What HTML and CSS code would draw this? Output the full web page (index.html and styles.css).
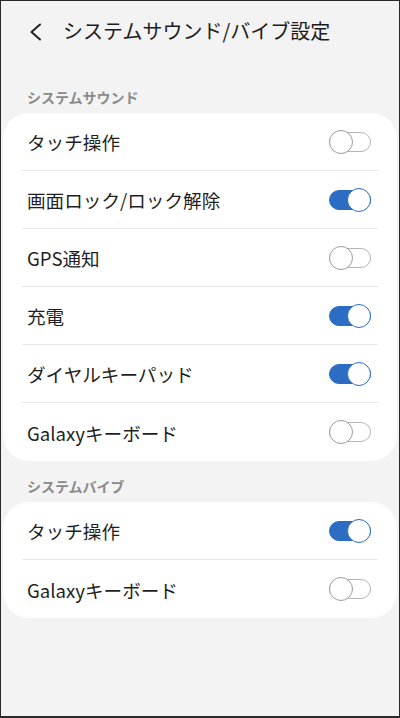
FILE: index.html
```html
<!DOCTYPE html>
<html lang="ja">
<head>
  <meta charset="UTF-8">
  <title>システムサウンド/バイブ設定</title>
  <link rel="stylesheet" href="styles.css">
</head>
<body>

  <div class="screen">
    <div class="top-bar">
      <svg class="back" width="14" height="18" viewBox="0 0 14 18">
        <polyline points="11,1.5 2.5,9 11,16.5" fill="none" stroke="#222" stroke-width="2" stroke-linecap="round" stroke-linejoin="round"/>
      </svg>
      <h1>システムサウンド/バイブ設定</h1>
    </div>

    <!-- System sound -->
    <div class="section-label">システムサウンド</div>
    <div class="card">
      <div class="row"><span>タッチ操作</span><span class="toggle"></span></div>
      <div class="row"><span>画面ロック/ロック解除</span><span class="toggle on"></span></div>
      <div class="row"><span>GPS通知</span><span class="toggle"></span></div>
      <div class="row"><span>充電</span><span class="toggle on"></span></div>
      <div class="row"><span>ダイヤルキーパッド</span><span class="toggle on"></span></div>
      <div class="row"><span>Galaxyキーボード</span><span class="toggle"></span></div>
    </div>

    <!-- System vibration -->
    <div class="section-label">システムバイブ</div>
    <div class="card">
      <div class="row"><span>タッチ操作</span><span class="toggle on"></span></div>
      <div class="row"><span>Galaxyキーボード</span><span class="toggle"></span></div>
    </div>
  </div>

</body>
</html>
```

FILE: styles.css
```css
body {
  margin: 0;
  font-family: "Noto Sans CJK JP", "Noto Sans", sans-serif;
  color: #1f1f1f;
}

.screen {
  box-sizing: border-box;
  width: 400px;
  height: 718px;
  background: #f3f3f3;
  border: 1px solid #2a2a2a;
  border-bottom-width: 2px;
  overflow: hidden;
}

/* Header */
.top-bar {
  display: flex;
  align-items: center;
  height: 60px;
  padding-left: 28px;
  margin-bottom: 11px;
}

.back {
  display: block;
  margin-top: 1px;
}

.top-bar h1 {
  margin: 0 0 0 20px;
  font-size: 20px;
  font-weight: 400;
  line-height: 24px;
  color: #1c1c1c;
}

.section-label {
  padding: 15px 26px 6px;
  font-size: 14px;
  line-height: 20px;
  font-weight: 700;
  color: #8a8a8a;
}

/* Cards & rows */
.card {
  margin: 0 2px;
  background: #fff;
  border-radius: 26px;
}

.row {
  display: flex;
  align-items: center;
  justify-content: space-between;
  height: 58px;
  margin: 0 19px;
  padding: 0 7px 0 5px;
  font-size: 18.6px;
  border-bottom: 1px solid #e8e8e8;
  box-sizing: border-box;
}

.row:last-child {
  border-bottom: none;
}

/* Switch */
.toggle {
  position: relative;
  width: 42px;
  height: 24px;
  flex-shrink: 0;
}

.toggle::before {
  content: "";
  position: absolute;
  left: 0;
  right: 0;
  top: 2px;
  bottom: 2px;
  box-sizing: border-box;
  border: 1.5px solid #b5b5b5;
  border-radius: 10px;
}

.toggle::after {
  content: "";
  position: absolute;
  top: 0;
  left: 0;
  width: 24px;
  height: 24px;
  box-sizing: border-box;
  border: 1.5px solid #9c9c9c;
  border-radius: 50%;
  background: #fff;
}

.toggle.on::before {
  background: #2c6dc3;
  border-color: #2c6dc3;
}

.toggle.on::after {
  left: 18px;
  border-color: #2c6dc3;
}
```
